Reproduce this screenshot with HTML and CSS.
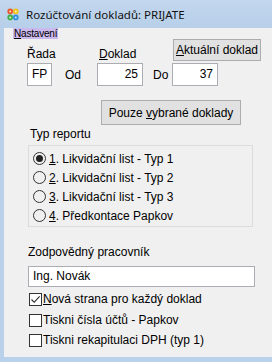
FILE: index.html
```html
<!DOCTYPE html>
<html>
<head>
<meta charset="utf-8">
<link rel="stylesheet" href="styles.css">
</head>
<body>
<div class="window">
  <div class="titlebar">
    <svg class="appicon" width="12" height="13" viewBox="0 0 12 13">
      <circle cx="3.2" cy="3.4" r="2.8" fill="#e8562a"/>
      <circle cx="8.8" cy="3.4" r="2.8" fill="#f2c21b"/>
      <circle cx="3.2" cy="9.4" r="2.8" fill="#3fae49"/>
      <circle cx="8.8" cy="9.4" r="2.8" fill="#2f8fdc"/>
      <circle cx="3.2" cy="3.4" r="1" fill="#fbe3c8"/>
      <circle cx="8.8" cy="3.4" r="1" fill="#fff3c0"/>
      <circle cx="3.2" cy="9.4" r="1" fill="#d4f0d0"/>
      <circle cx="8.8" cy="9.4" r="1" fill="#d0e6fa"/>
    </svg>
    <span class="title">Rozúčtování dokladů: PRIJATE</span>
  </div>
  <div class="menubar">
    <span class="menuitem"><u>N</u>astavení</span>
  </div>
  <div class="content">
    <div class="range">
      <span class="lbl lbl-rada">Řada</span>
      <span class="lbl lbl-doklad"><u>D</u>oklad</span>
      <button class="btn btn-akt"><u>A</u>ktuální doklad</button>
      <div class="input in-fp">FP</div>
      <span class="lbl lbl-od">Od</span>
      <div class="input in-num in-od">25</div>
      <span class="lbl lbl-do">Do</span>
      <div class="input in-num in-do">37</div>
    </div>
    <button class="btn btn-pouze">Pouze <u>v</u>ybrané doklady</button>
    <div class="section-label">Typ reportu</div>
    <div class="group">
      <div class="radio-row"><span class="radio checked"></span><span><u>1</u>. Likvidační list - Typ 1</span></div>
      <div class="radio-row"><span class="radio"></span><span><u>2</u>. Likvidační list - Typ 2</span></div>
      <div class="radio-row"><span class="radio"></span><span><u>3</u>. Likvidační list - Typ 3</span></div>
      <div class="radio-row"><span class="radio"></span><span><u>4</u>. Předkontace Papkov</span></div>
    </div>
    <div class="section-label label-zod">Zodpovědný pracovník</div>
    <div class="input in-wide">Ing. Novák</div>
    <div class="check-row first"><span class="check checked">
      <svg width="11" height="11" viewBox="0 0 11 11"><path d="M1.5 5.5 L4.2 8.3 L9.6 2.4" fill="none" stroke="#222" stroke-width="1.1"/></svg>
    </span><span><u>N</u>ová strana pro každý doklad</span></div>
    <div class="check-row"><span class="check"></span><span>Tiskni čísla účtů - Papkov</span></div>
    <div class="check-row"><span class="check"></span><span>Tiskni rekapitulaci DPH (typ 1)</span></div>
  </div>
</div>
</body>
</html>
```
FILE: styles.css
```css
html, body {
  margin: 0;
  padding: 0;
}
body {
  width: 272px;
  height: 362px;
  overflow: hidden;
  background: #b9d1ea;
  font-family: "Liberation Sans", Arial, sans-serif;
  font-size: 12px;
  color: #000;
}
.window {
  display: flex;
  flex-direction: column;
  height: 362px;
  background: #b9d1ea;
}
.titlebar {
  height: 28px;
  display: flex;
  align-items: center;
  padding-left: 7px;
  background: linear-gradient(to bottom, #c3d7ee, #b7cfe9);
  box-sizing: border-box;
  padding-top: 1px;
}
.appicon {
  margin-right: 7px;
}
.title {
  font-family: "Noto Sans", "Segoe UI", sans-serif;
  font-size: 11.5px;
  color: #111;
}
.menubar {
  height: 11px;
  display: flex;
  background: #f0f0f0;
  margin-left: 4px;
  padding-left: 9px;
}
.menuitem {
  background: #cbb8ec;
  font-size: 10px;
  line-height: 11px;
  padding: 0 1px;
  white-space: nowrap;
  letter-spacing: -0.2px;
}
.content {
  flex: 1;
  background: #f0f0f0;
  margin-left: 4px;
  margin-bottom: 5px;
  padding-left: 23px;
  display: flex;
  flex-direction: column;
  align-items: flex-start;
}
.range {
  display: grid;
  grid-template-columns: 25px 45px 46px 29px 89px;
  grid-template-rows: 24px 23px;
}
.lbl {
  line-height: 14px;
}
.lbl-rada {
  grid-column: 1 / 3;
  grid-row: 1;
  align-self: end;
  margin-bottom: 2px;
}
.lbl-doklad {
  grid-column: 3 / 5;
  grid-row: 1;
  align-self: end;
  margin-bottom: 2px;
  margin-left: 2px;
}
.btn {
  font-family: "Liberation Sans", Arial, sans-serif;
  font-size: 12px;
  color: #000;
  background: #e1e1e1;
  border: 1px solid #adadad;
  padding: 0;
  margin: 0;
}
.btn-akt {
  grid-column: 5;
  grid-row: 1;
  width: 88px;
  height: 22px;
  margin-left: 1px;
}
.input {
  background: #fff;
  border: 1px solid #abadb3;
  box-sizing: border-box;
  line-height: 21px;
  padding: 0 4px;
  white-space: nowrap;
}
.in-fp {
  grid-column: 1;
  grid-row: 2;
  padding-left: 4px;
}
.lbl-od {
  grid-column: 2;
  grid-row: 2;
  align-self: center;
  padding-left: 13px;
}
.in-num {
  text-align: right;
}
.in-od {
  grid-column: 3;
  grid-row: 2;
}
.lbl-do {
  grid-column: 4;
  grid-row: 2;
  align-self: center;
  padding-left: 10px;
}
.in-do {
  grid-column: 5;
  grid-row: 2;
  width: 46px;
}
.btn-pouze {
  margin-top: 14px;
  margin-left: 74px;
  width: 140px;
  height: 25px;
}
.section-label {
  line-height: 14px;
  margin-top: 2px;
  margin-left: 3px;
}
.group {
  margin-top: 4px;
  margin-left: 1px;
  width: 225px;
  height: 82px;
  box-sizing: border-box;
  border: 1px solid #dcdcdc;
  padding-top: 3px;
  padding-left: 4px;
}
.radio-row {
  height: 19px;
  display: flex;
  align-items: center;
}
.radio {
  width: 13px;
  height: 13px;
  box-sizing: border-box;
  border: 1px solid #333;
  border-radius: 50%;
  margin-right: 3px;
  display: flex;
  align-items: center;
  justify-content: center;
}
.radio.checked::after {
  content: "";
  width: 7px;
  height: 7px;
  border-radius: 50%;
  background: #222;
}
.label-zod {
  margin-top: 18px;
  margin-left: 1px;
}
.in-wide {
  margin-top: 7px;
  margin-left: 1px;
  width: 227px;
  height: 21px;
  line-height: 19px;
}
.check-row {
  display: flex;
  align-items: center;
  height: 20px;
  margin-left: 2px;
}
.check-row.first {
  margin-top: 1px;
  height: 22px;
}
.check {
  width: 13px;
  height: 13px;
  box-sizing: border-box;
  border: 1px solid #333;
  background: #fff;
  margin-right: 1px;
  display: flex;
  align-items: center;
  justify-content: center;
}
.check svg {
  display: block;
}
```
